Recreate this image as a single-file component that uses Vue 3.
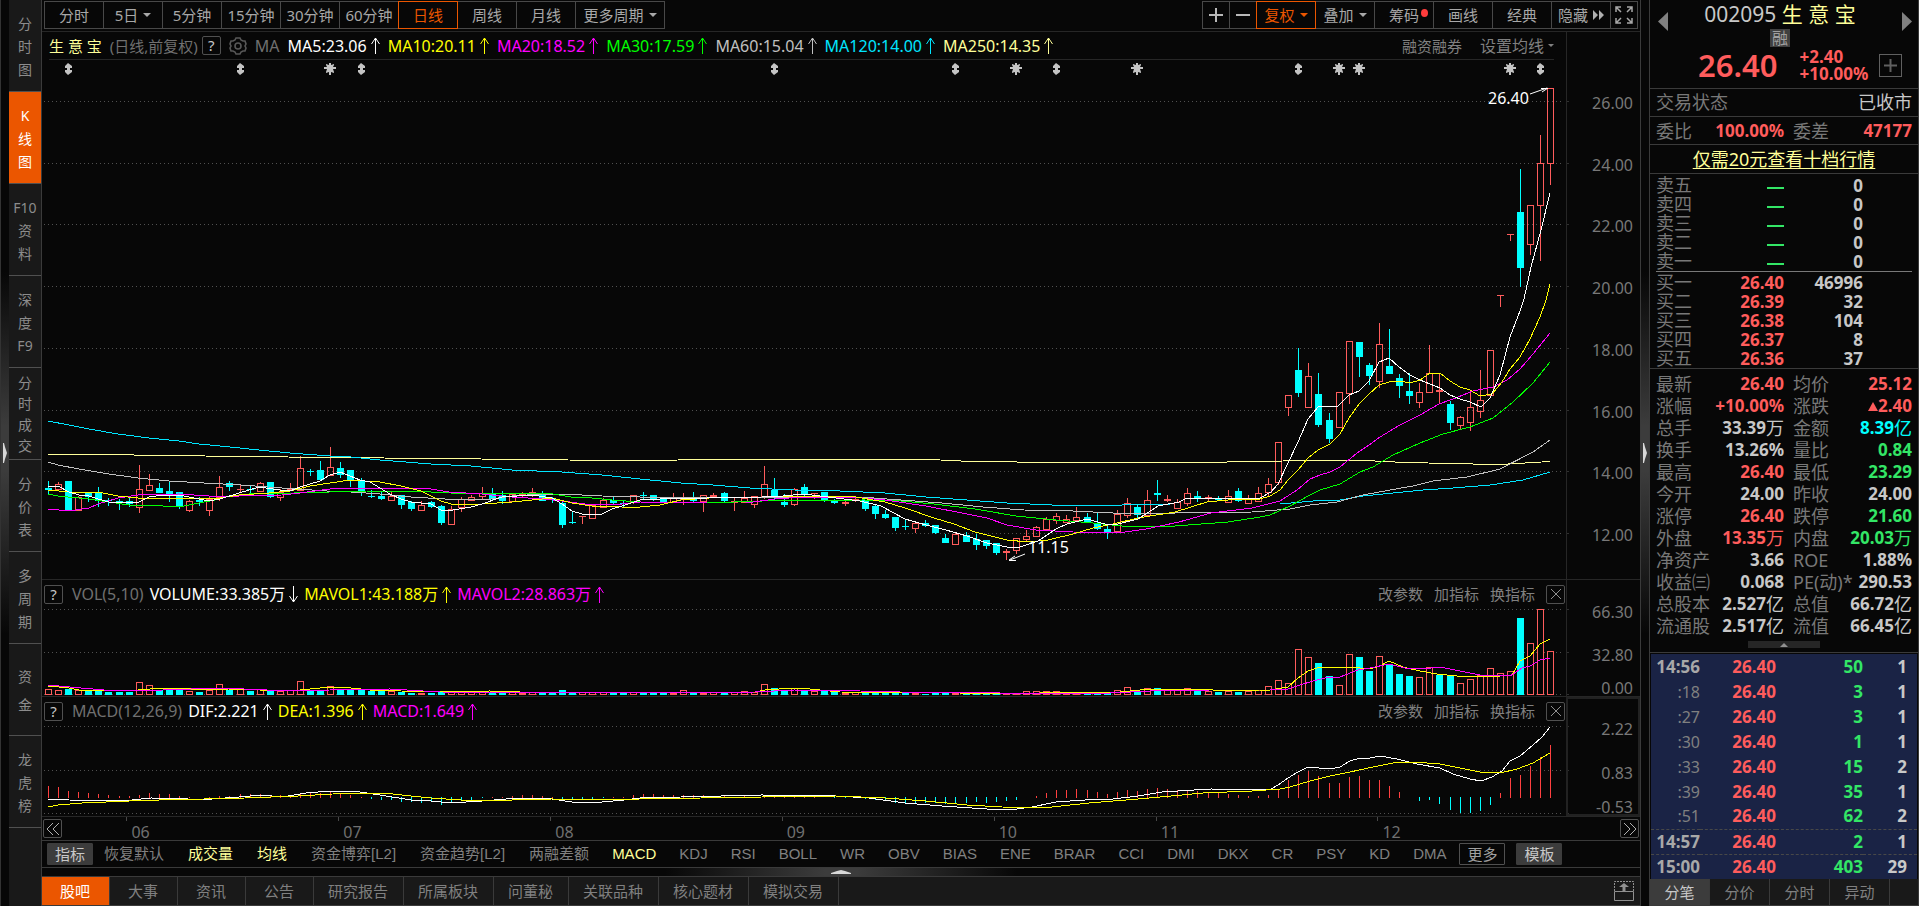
<template>
  <div class="app">
    <div class="split split-v">
      <svg width="4" height="20" viewBox="0 0 4 20"><path d="M0 0h1l1 4 2 6-2 6-1 4H0z" fill="#d8d8d8" /></svg>
    </div>

    <nav class="side">
      <button
        v-for="item in sideItems"
        :key="item.join('')"
        :class="['side-item', 'n' + item.length, { active: item[0] === 'K' }]"
      >
        <span v-for="ch in item" :key="ch">{{ ch }}</span>
      </button>
    </nav>

    <main class="main">
      <div class="toolbar">
        <div class="btns">
          <button v-for="p in periods" :key="p.text" :class="['tb', { active: p.text === '日线', wide: p.wide }]">
            {{ p.text }}<i v-if="p.caret" class="caret"></i>
          </button>
        </div>
        <div class="btns">
          <button class="tb icon" aria-label="放大">
            <svg width="16" height="16" viewBox="0 0 16 16"><path d="M1 8h14M8 1v14" stroke="#b8b8b8" stroke-width="2" /></svg>
          </button>
          <button class="tb icon" aria-label="缩小">
            <svg width="16" height="16" viewBox="0 0 16 16"><path d="M1 8h14" stroke="#b8b8b8" stroke-width="2" /></svg>
          </button>
          <button class="tb active">复权<i class="caret"></i></button>
          <button class="tb">叠加<i class="caret"></i></button>
          <button class="tb">筹码<i class="dot"></i></button>
          <button class="tb">画线</button>
          <button class="tb">经典</button>
          <button class="tb">隐藏
            <svg width="11" height="10" viewBox="0 0 11 10"><path d="M0 0l5 5-5 5zM6 0l5 5-5 5z" fill="#b0b0b0" /></svg>
          </button>
          <button class="tb icon" aria-label="全屏">
            <svg width="18" height="18" viewBox="0 0 18 18" fill="none" stroke="#a8a8a8" stroke-width="1.5">
              <path d="M1 6V1h5M12 1h5v5M17 12v5h-5M6 17H1v-5M1 1l5 5M17 1l-5 5M17 17l-5-5M1 17l5-5" />
            </svg>
          </button>
        </div>
      </div>

      <section class="panel price">
        <div class="plot">
          <div class="legend legend-main">
            <b class="stock">生 意 宝</b>
            <span class="dim cn">(日线,前复权)</span>
            <button class="q">?</button>
            <svg class="gear" width="18" height="18" viewBox="0 0 18 18" fill="none" stroke="#585858" stroke-width="1.6">
              <path d="M7 1h4l1 2 2 1 2 0 1 3-1 2 1 2-1 3-2 0-2 1-1 2H7l-1-2-2-1-2 0-1-3 1-2-1-2 1-3 2 0 2-1z" />
              <circle cx="9" cy="9" r="3" />
            </svg>
            <span class="dim">MA</span>
            <LegendValue v-for="m in maLegend" :key="m.text" :text="m.text" :color="m.color" />
            <span class="legend-right">
              <button class="txt">融资融券</button>
              <button class="txt set">设置均线<i class="caret"></i></button>
            </span>
          </div>
          <svg class="chart" viewBox="42 60 1524 519" preserveAspectRatio="none">
            <g class="grid">
              <path v-for="y in [101, 163, 224, 286, 348, 410, 471, 533]" :key="y" :d="`M44 ${y}.5H1564`" />
            </g>
            <path class="tick" d="M1566 101.5h3M1566 163.5h3M1566 224.5h3M1566 286.5h3M1566 348.5h3M1566 410.5h3M1566 471.5h3M1566 533.5h3" />
            <g v-for="m in marks" :key="m.i" fill="#c4c4c4" :transform="`translate(${xAt(m.i)} 69)`">
              <path v-if="m.star" d="M-1-6h2v2l3-1v1l-1 2h3v2H3l1 3v1L1 3v3h-2V3l-3 1V3l1-3h-3v-2h3l-1-2v-1l3 1z" />
              <path v-else d="M0-6l4 3v2H2v2h2v2L0 6l-3-3V1h2v-2h-2v-2z" />
            </g>
            <g v-for="(c, i) in candles" :key="i" :fill="c[0] === 'u' ? UP : DOWN" shape-rendering="crispEdges">
              <rect :x="xAt(i)" :y="c[1]" width="1" :height="c[2] - c[1]" />
              <rect :x="xAt(i)" :y="c[3]" width="1" :height="c[4] - c[3]" />
              <rect
                v-if="c[0] === 'u' && c[3] - c[2] > 2"
                :x="xAt(i) - 2.5" :y="c[2] + 0.5" width="6" :height="c[3] - c[2]" fill="none" :stroke="UP"
              />
              <rect v-else :x="xAt(i) - 3" :y="c[2]" width="7" :height="c[3] - c[2]" />
            </g>
            <polyline v-for="l in maLines" :key="l.color" class="line" :points="l.points" :stroke="l.color" />
            <text x="1488" y="104" class="note">26.40</text>
            <path class="arrow" d="M1530 94L1547 88M1541 88.5h7M1542 92l6-4" />
            <text x="1028" y="553" class="note">11.15</text>
            <path class="arrow" d="M1025 554L1010 560M1009 560.5h7M1009 560l6-4" />
          </svg>
        </div>
        <div class="axis axis-price">
          <span v-for="v in ['26.00', '24.00', '22.00', '20.00', '18.00', '16.00', '14.00', '12.00']" :key="v">{{ v }}</span>
        </div>
      </section>

      <section class="panel vol">
        <div class="plot">
          <div class="legend legend-sub">
            <button class="q">?</button>
            <span class="dim">VOL(5,10)</span>
            <LegendValue text="VOLUME:33.385万" color="#ffffff" down />
            <LegendValue text="MAVOL1:43.188万" color="#ffff00" />
            <LegendValue text="MAVOL2:28.863万" color="#ff00ff" />
            <PanelTools />
          </div>
          <svg class="chart" viewBox="42 608 1524 88" preserveAspectRatio="none">
            <path class="grid" d="M44 609.5H1564M44 652.5H1564M44 694.5H1564" />
            <path class="tick" d="M1566 609.5h3M1566 652.5h3M1566 694.5h3" />
            <template v-for="(v, i) in volumes" :key="i">
              <rect
                v-if="volUp(i) && v > 5"
                :x="xAt(i) - 2.5" :y="694.5 - Math.round(v / 3)" width="6" :height="Math.round(v / 3)"
                fill="#070707" :stroke="UP" shape-rendering="crispEdges"
              />
              <rect
                v-else
                :x="xAt(i) - 3" :y="695 - Math.round(v / 3)" width="7" :height="Math.round(v / 3)"
                :fill="volUp(i) ? UP : DOWN" shape-rendering="crispEdges"
              />
            </template>
            <polyline class="line" stroke="#ffff00" :points="mavol1" />
            <polyline class="line" stroke="#ff00ff" :points="mavol2" />
          </svg>
        </div>
        <div class="axis axis-sub"><span>66.30</span><span>32.80</span><span>0.00</span></div>
      </section>

      <section class="panel macd">
        <div class="plot">
          <div class="legend legend-sub">
            <button class="q">?</button>
            <span class="dim">MACD(12,26,9)</span>
            <LegendValue text="DIF:2.221" color="#ffffff" />
            <LegendValue text="DEA:1.396" color="#ffff00" />
            <LegendValue text="MACD:1.649" color="#ff00ff" />
            <PanelTools />
          </div>
          <svg class="chart" viewBox="42 725 1524 91" preserveAspectRatio="none">
            <path class="grid" d="M44 726.5H1564M44 770.5H1564M44 813.5H1564" />
            <path class="tick" d="M1566 726.5h3M1566 770.5h3M1566 813.5h3" />
            <rect
              v-for="(v, i) in macd"
              :key="i"
              :x="xAt(i)" :y="v > 0 ? 798 - Math.round(v / 3) : 797" width="1" :height="Math.abs(Math.round(v / 3))"
              :fill="v > 0 ? '#ff4040' : DOWN" shape-rendering="crispEdges"
            />
            <polyline class="line" stroke="#ffffff" :points="dif" />
            <polyline class="line" stroke="#ffff00" :points="dea" />
          </svg>
        </div>
        <div class="axis axis-sub boxed"><span>2.22</span><span>0.83</span><span>-0.53</span></div>
      </section>

      <div class="dates">
        <button class="q page" aria-label="向前">
          <svg width="14" height="14" viewBox="0 0 14 14" fill="none" stroke="#b0b0b0"><path d="M7 1L1 7l6 6M13 1L7 7l6 6" /></svg>
        </button>
        <span class="month first" :style="{ flexGrow: 66 }"></span>
        <span v-for="m in months" :key="m.text" class="month" :style="{ flexGrow: m.span }">{{ m.text }}</span>
        <span class="date-end">
          <button class="q page" aria-label="向后">
            <svg width="14" height="14" viewBox="0 0 14 14" fill="none" stroke="#b0b0b0"><path d="M1 1l6 6-6 6M7 1l6 6-6 6" /></svg>
          </button>
        </span>
      </div>

      <div class="indicators">
        <button class="chip filled">指标</button>
        <button
          v-for="t in indicators"
          :key="t"
          :class="['ind', { latin: /^[A-Z]+$/.test(t), on: ['成交量', '均线', 'MACD'].includes(t) }]"
        >{{ t }}</button>
        <span class="chips">
          <button class="chip">更多</button>
          <button class="chip filled">模板</button>
        </span>
      </div>

      <div class="split split-h">
        <svg width="20" height="4" viewBox="0 0 20 4"><path d="M0 4V3l6-2 4-1 4 1 6 2v1z" fill="#d8d8d8" /></svg>
      </div>

      <div class="tabs">
        <button v-for="t in bottomTabs" :key="t" :class="['tab', { active: t === '股吧' }]">{{ t }}</button>
        <button class="dock" aria-label="展开">
          <svg width="20" height="20" viewBox="0 0 20 20" fill="none" stroke="#909090">
            <path d="M.5 10V.5h19V10" stroke-dasharray="2 1" />
            <path d="M.5 10.5h19v9H.5z" />
            <path d="M10 10V4" stroke-width="3" />
            <path d="M5 6l5-4 5 4z" fill="#909090" stroke="none" />
          </svg>
        </button>
      </div>
    </main>

    <div class="split split-v right">
      <svg width="4" height="20" viewBox="0 0 4 20"><path d="M0 0h1l1 4 2 6-2 6-1 4H0z" fill="#d8d8d8" /></svg>
    </div>

    <aside class="quote">
      <header class="head">
        <button class="nav-arrow" aria-label="上一只">
          <svg width="10" height="19" viewBox="0 0 10 19"><path d="M10 0v19L0 9.500z" fill="#808080" /></svg>
        </button>
        <div class="head-mid">
          <h1>002095 <span>生 意 宝</span></h1>
          <span class="badge">融</span>
          <div class="price-row">
            <strong>26.40</strong>
            <span class="chg">+2.40<br />+10.00%</span>
            <button class="add" aria-label="加自选">
              <svg width="13" height="13" viewBox="0 0 13 13"><path d="M0 6.500h13M6.500 0v13" stroke="#606060" stroke-width="2" /></svg>
            </button>
          </div>
        </div>
        <button class="nav-arrow" aria-label="下一只">
          <svg width="10" height="19" viewBox="0 0 10 19"><path d="M0 0v19l10-9.500z" fill="#808080" /></svg>
        </button>
      </header>

      <div class="line-row"><span>交易状态</span><span class="state">已收市</span></div>
      <dl class="stats one">
        <div><dt>委比</dt><dd class="red">100.00%</dd></div>
        <div><dt>委差</dt><dd class="red">47177</dd></div>
      </dl>
      <a class="promo" href="#">仅需20元查看十档行情</a>

      <table class="book">
        <colgroup><col class="c1" /><col class="c2" /><col class="c3" /><col /></colgroup>
        <tbody class="sell">
          <tr v-for="n in '五四三二一'" :key="n">
            <th>卖{{ n }}</th><td><i class="dash"></i></td><td>0</td><td></td>
          </tr>
        </tbody>
        <tbody class="buy">
          <tr v-for="b in bids" :key="b[0]">
            <th>{{ b[0] }}</th><td class="red">{{ b[1] }}</td><td>{{ b[2] }}</td><td></td>
          </tr>
        </tbody>
      </table>

      <dl class="stats">
        <div v-for="s in stats" :key="s[0]">
          <dt>{{ s[0] }}</dt>
          <dd :class="s[2]"><i v-if="s[4]" class="tri"></i>{{ s[1] }}<span v-if="s[3]" class="unit">{{ s[3] }}</span></dd>
        </div>
      </dl>

      <div class="fold">
        <button aria-label="收起"><svg width="8" height="4" viewBox="0 0 8 4"><path d="M4 0l4 4H0z" fill="#909090" /></svg></button>
      </div>

      <table class="ticks">
        <colgroup><col class="t1" /><col class="t2" /><col class="t3" /><col /></colgroup>
        <tbody>
          <tr v-for="t in ticks" :key="t[0]" :class="{ cut: t[0] === '14:57' || t[0] === '15:00' }">
            <td :class="t[0][0] === ':' ? 'sec' : 'min'">{{ t[0] }}</td>
            <td class="red">26.40</td>
            <td class="green">{{ t[1] }}</td>
            <td>{{ t[2] }}</td>
          </tr>
        </tbody>
      </table>

      <div class="qtabs">
        <button v-for="t in ['分笔', '分价', '分时', '异动']" :key="t" :class="{ active: t === '分笔' }">{{ t }}</button>
      </div>
    </aside>
  </div>
</template>

<script setup>
import { h } from 'vue'

const UP = '#ff5c5c'
const DOWN = '#00ffff'

const LegendValue = (props) =>
  h('span', { class: 'lv', style: { color: props.color } }, [
    props.text,
    h('svg', { class: 'lv-arrow', width: 9, height: 17, viewBox: '0 0 9 17', fill: 'none', stroke: 'currentColor' }, [
      h('path', { d: props.down ? 'M4.5 0v16M.5 10l4 6 4-6' : 'M4.5 17V1M.5 7l4-6 4 6' })
    ])
  ])
LegendValue.props = { text: String, color: String, down: Boolean }

const PanelTools = () =>
  h('span', { class: 'tools' }, [
    ...['改参数', '加指标', '换指标'].map((t) => h('button', { class: 'tool' }, t)),
    h('button', { class: 'tool close', 'aria-label': '关闭' }, [
      h('svg', { width: 10, height: 10, viewBox: '0 0 10 10', stroke: '#909090' }, [h('path', { d: 'M0 0l10 10M10 0L0 10' })])
    ])
  ])

const sideItems = ['分时图', 'K线图', ['F10', '资', '料'], ['深', '度', 'F9'], '分时成交', '分价表', '多周期', '资金', '龙虎榜'].map((s) => [...s])

const periods = [
  { text: '分时' }, { text: '5日', caret: true }, { text: '5分钟' }, { text: '15分钟' }, { text: '30分钟' },
  { text: '60分钟' }, { text: '日线' }, { text: '周线' }, { text: '月线' }, { text: '更多周期', caret: true, wide: true }
]

const maLegend = [
  { text: 'MA5:23.06', color: '#ffffff' },
  { text: 'MA10:20.11', color: '#ffff00' },
  { text: 'MA20:18.52', color: '#ff00ff' },
  { text: 'MA30:17.59', color: '#00ff00' },
  { text: 'MA60:15.04', color: '#c0c0c0' },
  { text: 'MA120:14.00', color: '#00e5ff' },
  { text: 'MA250:14.35', color: '#ffff99' }
]

const indicators = ['恢复默认', '成交量', '均线', '资金博弈[L2]', '资金趋势[L2]', '两融差额', 'MACD', 'KDJ', 'RSI', 'BOLL', 'WR', 'OBV', 'BIAS', 'ENE', 'BRAR', 'CCI', 'DMI', 'DKX', 'CR', 'PSY', 'KD', 'DMA']
const bottomTabs = ['股吧', '大事', '资讯', '公告', '研究报告', '所属板块', '问董秘', '关联品种', '核心题材', '模拟交易']

const months = [
  { text: '06', span: 212 }, { text: '07', span: 212 }, { text: '08', span: 232 }, { text: '09', span: 212 },
  { text: '10', span: 161 }, { text: '11', span: 222 }, { text: '12', span: 187 }
]

const bids = [['买一', '26.40', 46996], ['买二', '26.39', 32], ['买三', '26.38', 104], ['买四', '26.37', 8], ['买五', '26.36', 37]]

const stats = [
  ['最新', '26.40', 'red'], ['均价', '25.12', 'red'],
  ['涨幅', '+10.00%', 'red'], ['涨跌', '2.40', 'red', '', true],
  ['总手', '33.39', '', '万'], ['金额', '8.39', 'cyan', '亿'],
  ['换手', '13.26%', ''], ['量比', '0.84', 'green'],
  ['最高', '26.40', 'red'], ['最低', '23.29', 'green'],
  ['今开', '24.00', ''], ['昨收', '24.00', ''],
  ['涨停', '26.40', 'red'], ['跌停', '21.60', 'green'],
  ['外盘', '13.35', 'red', '万'], ['内盘', '20.03', 'green', '万'],
  ['净资产', '3.66', ''], ['ROE', '1.88%', ''],
  ['收益㈢', '0.068', ''], ['PE(动)*', '290.53', ''],
  ['总股本', '2.527', '', '亿'], ['总值', '66.72', '', '亿'],
  ['流通股', '2.517', '', '亿'], ['流值', '66.45', '', '亿']
]

const ticks = [
  ['14:56', 50, 1], [':18', 3, 1], [':27', 3, 1], [':30', 1, 1], [':33', 15, 2],
  [':39', 35, 1], [':51', 62, 2], ['14:57', 2, 1], ['15:00', 403, 29]
]

const xAt = (i) => Math.round(48 + i * 10.083)

const marks = [2, 19, 28, 31, 72, 90, 96, 100, 108, 124, 128, 130, 145, 148].map((i) => ({
  i,
  star: [28, 96, 108, 128, 130, 145].includes(i)
}))

// direction, high, body top, body bottom, low
const candles = `d481,488,490,494 u482,484,489,490 d481,481,510,510 u496,497,510,510 d492,493,497,502 d487,493,501,507
d498,500,501,506 d499,501,502,510 d497,501,504,507 u465,489,507,513 u474,485,490,490 d483,488,493,493 d482,491,495,502
d492,492,506,509 u500,501,510,512 d497,500,502,506 u497,499,510,516 u476,487,497,501 d481,483,487,491 u484,489,490,493
d485,489,490,493 u482,483,491,491 d482,482,497,498 u489,492,497,501 u483,489,491,491 u456,468,490,491 d469,471,472,476
d461,470,480,480 u447,467,475,476 d462,468,475,478 d470,470,480,487 d478,481,491,496 d490,496,497,498 d492,496,499,500
u492,496,500,500 d495,495,505,509 d501,502,509,511 u501,505,510,510 d501,502,507,508 d505,506,523,525 u506,509,524,524
u497,499,507,512 u495,497,500,501 u487,493,496,499 d488,493,499,501 d491,495,501,504 u493,494,501,502 u492,494,496,497
u488,492,495,497 d491,493,501,501 d497,499,500,503 d501,503,525,528 d511,522,523,524 u516,516,517,524 u505,505,518,518
u498,500,507,508 d497,500,503,505 d500,503,504,507 u495,495,502,504 d492,495,496,499 d495,495,500,501 d497,499,503,503
u493,497,502,503 u493,498,500,505 d492,498,501,502 u495,495,501,512 u493,495,497,497 d492,493,501,502 u497,501,503,511
u491,498,502,503 u496,496,504,508 u466,484,496,499 d478,490,496,499 d494,502,505,507 u488,489,504,506 d484,487,494,496
u493,493,494,499 d492,492,500,502 d499,500,503,504 u499,502,504,506 u496,499,501,502 d500,500,509,511 d504,506,514,519
d510,514,518,519 d517,517,528,531 d519,526,527,530 u521,523,528,533 d520,523,526,527 d525,525,533,534 d534,538,543,543
u533,534,544,544 d532,535,542,542 d534,539,545,550 d540,540,546,549 d543,543,553,555 u549,551,553,560 u538,538,550,554
u530,536,539,542 u526,527,536,536 u517,519,529,530 u513,516,520,524 u515,519,522,523 u507,517,520,521 d513,517,522,523
d512,523,529,530 d525,529,533,539 u510,514,531,533 u498,503,515,518 d504,507,515,519 u490,500,515,517 d480,493,495,501
u495,499,501,502 u499,502,508,508 u488,493,503,506 d491,496,499,502 u495,497,498,502 d496,498,500,501 u490,496,502,503
d488,491,501,502 u495,499,503,504 u487,493,501,502 u478,484,492,496 u442,442,482,485 u395,395,407,416 d348,370,393,397
u363,376,407,407 d373,394,425,427 d413,420,439,443 u392,392,427,427 u341,341,393,404 d342,342,357,377 d363,365,376,385
u323,344,381,388 d329,366,374,374 d374,378,386,398 d373,391,396,404 u383,392,402,408 u345,373,392,393 u373,390,392,404
d401,404,423,430 u416,417,425,429 u393,407,422,431 u370,400,411,418 u350,350,395,395 u295,295,296,307 u234,234,235,241
d169,212,268,287 u205,205,244,255 u135,163,205,261 u88,88,163,185`
  .split(/\s+/)
  .map((s) => [s[0], ...s.slice(1).split(',').map(Number)])

const volumes = [
  16, 13, 18, 12, 12, 12, 8, 9, 10, 37, 28, 16, 16, 16, 10, 8, 13, 31, 16, 15, 12, 15, 12, 10, 11, 38, 16, 16, 25, 16,
  15, 14, 11, 12, 8, 9, 6, 5, 6, 13, 7, 9, 7, 7, 6, 7, 6, 5, 6, 5, 6, 14, 8, 6, 7, 7, 5, 5, 6, 5,
  6, 6, 5, 11, 6, 5, 6, 6, 6, 10, 6, 31, 20, 12, 17, 12, 8, 11, 9, 5, 7, 8, 7, 6, 7, 6, 5, 4, 5, 5,
  5, 4, 4, 4, 5, 4, 5, 8, 8, 8, 10, 4, 6, 5, 6, 7, 13, 20, 10, 19, 22, 11, 13, 19, 12, 10, 10, 10, 10, 8,
  13, 25, 43, 34, 136, 112, 95, 56, 28, 121, 113, 71, 115, 89, 62, 56, 50, 82, 59, 56, 34, 46, 56, 79, 62, 68, 230, 154, 256, 130
]
// bars coloured by the previous close rather than by the candle body
const volFlip = [0, 124, 138]
const volUp = (i) => (candles[i][0] === 'u') !== volFlip.includes(i)

const macd = [
  35, 32, 20, 17, 14, 11, 8, 5, 5, 8, 14, 11, 11, 5, 2, 0, 2, 5, 7, 11, 11, 11, 8, 8, 5, 14, 14, 14, 17, 11,
  8, 2, -5, -8, -10, -14, -16, -17, -16, -23, -16, -10, -8, -4, 2, 2, 5, 8, 8, 5, 2, -8, -10, -10, -6, -4, 2, 2, 8, 11,
  11, 8, 8, 8, 8, 8, 6, 5, 4, 5, 4, 5, 6, 5, 5, 4, 3, 0, -2, -2, -3, -5, -8, -13, -18, -18, -18, -17, -17, -20,
  -17, -18, -16, -17, -16, -13, -8, 0, 5, 14, 23, 23, 26, 23, 17, 11, 17, 23, 20, 26, 29, 26, 23, 23, 20, 17, 14, 11, 8, 5,
  5, 8, 26, 53, 68, 80, 65, 44, 44, 62, 65, 53, 53, 35, 17, 0, -11, -10, -20, -38, -47, -49, -43, -23, 14, 59, 68, 95, 122, 158
]

const maLines = [
  { color: '#ffff99', points: '48,454.5 104,454.5 164,455.5 245,456.5 330,457.5 437,458.5 568,460 633,460.5 678,460 740,459.5 930,459.5 971,461.5 1062,462.5 1200,462.5 1283,461 1365,460.5 1395,462 1445,463.5 1500,464.5 1550,461.5' },
  { color: '#00e5ff', points: '48,421 69,425 89,429 118,434 149,438 179,441 199,444 220,446 259,450 290,453 330,456 351,457 380,460 431,464 471,466 512,470 562,472 602,475 640,479 681,483 713,485 750,488 794,490 840,491 885,493 926,497 967,500 1007,503 1052,505 1122,505 1171,504 1280,504 1313,501 1340,500 1363,496 1393,493 1423,490 1453,488 1490,485 1523,480 1550,472' },
  { color: '#c0c0c0', points: '48,462 58,465 79,469 109,474 138,478 169,481 204,483 241,485 282,488 327,491 351,492 380,494 411,497 462,500 491,499 512,496 542,494 582,495 602,496 640,497 762,497 860,497 901,500 942,503 983,507 1024,510 1073,511 1113,513 1175,513 1252,512 1290,509 1310,505 1337,502 1363,495 1390,490 1413,486 1433,481 1467,477 1500,469 1533,452 1550,440' },
  { color: '#00ff00', points: '48,494 58,496 89,499 109,502 129,505 163,506 179,507 199,503 220,499 229,496 249,494 294,493 330,492 367,491 411,491 451,493 547,493 571,497 592,498 612,500 640,502 707,503 762,501 864,500 901,501 934,504 975,509 1016,516 1056,520 1093,523 1122,526 1175,526 1228,522 1260,517 1270,515 1290,506 1310,495 1320,490 1340,484 1360,472 1373,467 1393,455 1420,443 1443,434 1470,427 1493,418 1513,402 1533,383 1550,362' },
  { color: '#ff00ff', points: '48,509 69,511 89,508 98,504 118,498 138,495 179,494 209,496 239,496 282,495 300,493 330,489 360,488 401,488 431,489 449,492 482,494 512,497 543,499 562,501 592,505 622,504 640,502 707,503 746,503 775,499 803,497 852,497 885,500 926,506 967,514 987,518 1007,525 1036,530 1073,532 1118,533 1146,529 1179,522 1211,513 1252,508 1280,501 1297,490 1310,479 1320,475 1330,472 1340,467 1357,453 1369,445 1380,437 1400,425 1420,415 1439,404 1453,399 1473,391 1493,387 1507,380 1520,369 1533,354 1550,333' },
  { color: '#ffff00', points: '48,490 69,492 98,492 118,496 138,498 220,498 239,495 269,493 290,491 310,486 330,483 350,480 380,482 401,486 421,491 441,501 451,504 482,504 512,502 552,498 572,503 592,506 622,507 640,507 660,505 681,500 709,498 762,497 794,496 850,496 885,502 905,508 934,518 954,524 975,532 1007,540 1028,542 1048,540 1073,534 1093,528 1113,524 1138,518 1175,512 1207,502 1228,500 1260,499 1270,496 1280,490 1288,480 1298,470 1308,458 1318,450 1330,444 1340,434 1349,418 1359,404 1369,394 1379,385 1389,382 1400,381 1410,383 1420,380 1430,373 1440,373 1450,381 1460,387 1470,390 1480,396 1492,394 1502,382 1510,369 1520,357 1530,339 1540,317 1546,300 1550,284' },
  { color: '#ffffff', points: '48,487 58,486 69,492 79,495 89,496 98,499 109,502 139,502 149,497 163,495 179,495 189,497 209,501 220,499 239,493 259,487 280,490 290,491 300,487 320,481 330,475 340,472 350,476 360,480 370,482 390,494 401,499 411,502 431,504 441,510 453,510 471,507 482,504 502,497 532,495 552,498 562,504 572,511 582,514 602,514 612,509 622,506 640,500 660,499 681,498 707,498 762,497 783,496 803,494 820,496 844,499 860,501 881,506 905,519 926,525 946,530 967,536 987,543 1007,547 1020,547 1038,541 1056,529 1067,524 1087,519 1105,524 1118,524 1138,519 1158,506 1179,502 1187,498 1260,498 1271,492 1278,484 1288,463 1298,442 1308,419 1318,407 1338,406 1349,395 1359,391 1369,381 1379,362 1389,358 1399,367 1410,375 1420,380 1430,384 1440,388 1450,395 1460,399 1470,402 1481,407 1490,398 1500,375 1510,337 1520,311 1524,299 1531,267 1541,230 1550,193' }
]

const mavol1 = '48,686 69,688 79,690 115,691 138,690 163,688 185,688 196,690 229,689 290,691 310,689 330,687 351,688 370,690 401,691 440,692 490,691 520,692 640,693 755,692 765,690 794,688 810,689 840,692 960,693 1040,693 1070,692 1120,692 1150,689 1200,689 1225,691 1260,690 1270,690 1288,687 1298,678 1308,671 1320,667 1343,667 1360,668 1370,669 1380,666 1389,661 1403,667 1420,671 1437,674 1457,676 1480,677 1500,676 1512,675 1520,661 1530,656 1540,644 1550,639'
const mavol2 = '48,685 70,687 115,691 163,690 220,688 290,691 330,690 390,689 440,692 640,693 755,692 794,690 860,691 900,692 1000,693 1110,693 1150,691 1210,690 1270,690 1288,689 1300,685 1313,681 1325,678 1340,677 1358,670 1370,668 1389,664 1405,668 1423,669 1440,667 1460,671 1480,675 1510,676 1522,668 1530,666 1540,660 1550,658'
const dif = '48,800 58,799 69,800 122,801 151,798 188,799 212,799 239,797 261,795 282,797 306,793 330,791 353,791 380,795 411,800 431,801 451,803 482,801 506,799 531,798 552,799 572,802 602,802 624,800 640,798 681,797 762,795 836,796 869,798 905,803 942,806 987,809 1009,810 1032,807 1056,802 1085,800 1113,799 1138,796 1162,792 1211,789 1260,790 1271,789 1278,785 1288,778 1298,772 1308,767 1330,769 1340,767 1350,761 1360,758 1370,758 1380,756 1397,759 1417,764 1440,768 1453,774 1470,779 1481,781 1492,777 1502,771 1510,761 1520,756 1533,745 1542,737 1550,727'
const dea = '48,807 58,805 82,803 106,802 129,801 159,800 204,799 245,798 298,796 350,793 384,793 411,796 431,798 461,800 512,800 552,799 592,800 640,799 762,797 836,796 885,798 926,801 967,805 1020,808 1052,807 1089,803 1138,799 1171,796 1203,793 1252,791 1280,789 1290,787 1310,781 1330,776 1350,772 1373,767 1393,763 1413,762 1440,764 1460,768 1480,772 1500,773 1517,769 1533,763 1550,753'
</script>

<style>
html, body { background: #070707; }
.lv { display: flex; align-items: center; gap: 4px; white-space: nowrap; }
.lv-arrow { flex: none; }
.tools { margin-left: auto; display: flex; align-items: center; gap: 11px; }
.tool { border: 0; padding: 0; background: none; color: #808080; font: 15px/20px "Noto Sans", "Noto Sans CJK SC", sans-serif; }
.tool.close { width: 19px; height: 19px; border: 1px solid #505050; border-radius: 2px; display: flex; align-items: center; justify-content: center; }
</style>

<style scoped>
.app {
  display: flex;
  height: 100vh;
  min-height: 906px;
  background: #070707;
  color: #c8c8c8;
  font-family: "Noto Sans", "Noto Sans CJK SC", sans-serif;
  font-size: 15px;
  line-height: 20px;
  box-sizing: border-box;
}
.app *, .app *::before { box-sizing: border-box; }
button { font-family: inherit; font-size: 15px; line-height: 20px; background: none; border: 0; padding: 0; margin: 0; color: inherit; white-space: nowrap; cursor: pointer; }
svg { display: block; }
i { font-style: normal; }

.split { display: flex; align-items: center; justify-content: center; flex: none; }
.split-v { width: 9px; border-left: 1px solid #333; background: linear-gradient(#070707 30%, #3c3c3c 47%, #3c3c3c 52%, #070707 70%); }
.split-v.right { width: 8px; border: 0; }
.split-h { height: 9px; border-bottom: 1px solid #3a3a3a; background: linear-gradient(90deg, #070707 39%, #3c3c3c 49%, #3c3c3c 51%, #070707 61%); }

.side { width: 33px; flex: none; background: #191919; border-right: 1px solid #3a3a3a; display: flex; flex-direction: column; }
.side-item { height: 92px; padding-top: 2px; border-bottom: 1px solid #505050; display: flex; flex-direction: column; align-items: center; justify-content: center; color: #8c8c8c; font-size: 14px; line-height: 23px; }
.side-item.n4 { line-height: 21px; padding-top: 0; }
.side-item.n2 { line-height: 28px; }
.side-item.active { background: #eb5600; color: #fff; }

.main { flex: 1; min-width: 0; display: flex; flex-direction: column; border-right: 1px solid #3a3a3a; }
.toolbar { height: 32px; flex: none; padding: 1px 2px 0; border-bottom: 1px solid #262626; display: flex; justify-content: space-between; align-items: flex-start; }
.btns { display: flex; }
.tb { width: 60px; height: 28px; margin-right: -1px; border: 1px solid #484848; color: #a8a8a8; display: flex; align-items: center; justify-content: center; gap: 5px; }
.btns .tb:last-child { margin-right: 0; }
.tb.wide { width: 90px; }
.tb.icon { width: 28px; }
.tb.active { border-color: #eb5600; color: #eb5600; position: relative; }
.caret { border: 4px solid transparent; border-top-color: currentColor; border-bottom: 0; }
.dot { width: 7px; height: 8px; border-radius: 50%; background: #ff3c3c; align-self: flex-start; margin: 7px -9px 0 -3px; }

.panel { display: flex; border-bottom: 1px solid #262626; }
.price { flex: 1; min-height: 0; }
.vol { height: 117px; }
.macd { height: 120px; }
.plot { flex: 1; min-width: 0; display: flex; flex-direction: column; }
.legend { height: 28px; flex: none; padding: 0 1px 0 2px; display: flex; align-items: center; font-size: 16px; }
.legend-sub { gap: 6px; }
.legend-sub .q { margin-right: 3px; }
.legend-main { margin: 0 12px 0 7px; padding: 0; border-bottom: 1px solid #262626; gap: 8px; }
.stock { color: #ffff99; font-weight: normal; font-size: 15px; white-space: nowrap; }
.dim { color: #707070; white-space: nowrap; }
.cn { font-size: 15px; margin-right: -4px; }
.q { width: 19px; height: 19px; border: 1px solid #505050; border-radius: 2px; color: #c8c8c8; line-height: 17px; display: flex; align-items: center; justify-content: center; flex: none; }
.legend-right { margin-left: auto; display: flex; gap: 18px; color: #808080; }
.txt { display: flex; align-items: center; gap: 4px; }
.txt.set { font-size: 16px; }
.txt .caret { border-width: 3px; border-bottom: 0; }
.chart { flex: 1; width: 100%; min-height: 0; overflow: visible; }
.grid, .grid path { stroke: #505050; stroke-dasharray: 1 3; fill: none; shape-rendering: crispEdges; }
.tick { stroke: #303030; }
.line { fill: none; stroke-width: 1; shape-rendering: crispEdges; }
.note { fill: #fff; font-size: 16px; }
.arrow { stroke: #fff; fill: none; }
.axis { width: 74px; flex: none; border-left: 1px solid #262626; padding-right: 7px; display: flex; flex-direction: column; color: #787878; font-size: 16px; text-align: right; }
.axis span { flex: 1; display: flex; align-items: center; justify-content: flex-end; }
.axis-price { padding-top: 40px; padding-bottom: 13px; }
.axis-sub { padding-top: 10px; }
.axis-sub span { flex: none; height: 43px; }
.axis-sub span:last-child { height: 24px; }
.boxed { border: 2px solid #222; padding-top: 8px; padding-right: 5px; }
.boxed span { height: 44px; }

.dates { height: 24px; border-bottom: 1px solid #3a3a3a; display: flex; padding: 2px 1px 0; }
.month { flex: 0 0 0; position: relative; padding-left: 5px; font-size: 16px; line-height: 26px; height: 20px; color: #707070; }
.month:not(.first)::before { content: ""; position: absolute; left: 0; top: -2px; width: 1px; height: 4px; background: #484848; }
.month.first { padding: 0; }
.date-end { width: 74px; flex: none; display: flex; justify-content: flex-end; }

.indicators { height: 27px; padding-left: 5px; border-bottom: 1px solid #3a3a3a; display: flex; align-items: center; gap: 24px; color: #808080; }
.ind { font-family: "Liberation Sans", "Noto Sans CJK SC", sans-serif; }
.ind.latin { margin-left: -1px; }
.ind.on { color: #ffff99; }
.chip { width: 46px; height: 22px; border: 1px solid #505050; border-radius: 1px; color: #a0a0a0; }
.chip.filled { background: #3c3c3c; border-color: #3c3c3c; color: #c8c8c8; }
.indicators > .chip { margin-right: -13px; }
.chips { display: flex; gap: 11px; margin-left: -11px; }

.tabs { height: 29px; background: #191919; border-bottom: 1px solid #3a3a3a; display: flex; }
.tab { min-width: 68px; padding: 0 15px 0 14px; border-right: 1px solid #3a3a3a; color: #808080; }
.tab.active { background: #eb5600; color: #fff; }
.dock { margin-left: auto; margin-right: 6px; display: flex; align-items: center; }

.quote { width: 270px; flex: none; border-left: 1px solid #3a3a3a; border-right: 1px solid #3a3a3a; display: flex; flex-direction: column; }
.head { height: 89px; border-bottom: 1px solid #3a3a3a; padding: 0 6px 0 8px; display: flex; justify-content: space-between; align-items: flex-start; }
.nav-arrow { margin-top: 12px; }
.head-mid { flex: 1; display: flex; flex-direction: column; align-items: center; padding-left: 10px; }
h1 { margin: 0 20px 0 0; font-size: 21px; line-height: 29px; font-weight: normal; white-space: nowrap; }
h1 span { color: #ffff99; }
.badge { width: 20px; height: 18px; margin-right: 20px; background: #404040; color: #a0a0a0; font-size: 16px; line-height: 18px; text-align: center; }
.price-row { align-self: stretch; display: flex; align-items: center; height: 36px; padding-left: 20px; color: #ff5c5c; font-weight: bold; }
.price-row strong { font-size: 31px; line-height: 34px; font-weight: 600; }
.chg { margin-left: 22px; font-size: 17px; line-height: 17px; }
.add { width: 23px; height: 23px; margin-left: auto; border: 1px solid #606060; display: flex; align-items: center; justify-content: center; }

.line-row { height: 29px; border-bottom: 1px solid #3a3a3a; padding: 0 6px; display: flex; justify-content: space-between; align-items: center; font-size: 18px; color: #787878; }
.state { color: #c8c8c8; }
.stats { margin: 0; padding: 4px 6px 0; display: grid; grid-template-columns: 128px 1fr; column-gap: 9px; }
.stats > div { display: flex; justify-content: space-between; align-items: center; height: 22px; white-space: nowrap; }
.stats dt { color: #787878; font-size: 18px; }
.stats dd { margin: 0; font-size: 17px; font-weight: bold; display: flex; align-items: center; }
.unit { font-weight: normal; font-size: 18px; }
.tri { border: 5px solid transparent; border-bottom: 9px solid #ff5c5c; border-top: 0; }
.stats.one { height: 28px; padding: 0 6px; align-items: center; border-bottom: 1px solid #3a3a3a; }
.promo { height: 29px; border-bottom: 1px solid #3a3a3a; color: #ffff99; font-size: 18px; line-height: 28px; text-align: center; text-underline-offset: 2px; }

.red { color: #ff5c5c; }
.green { color: #33e666; }
.cyan { color: #00ffff; }

table { border-collapse: collapse; table-layout: fixed; }
th, td { padding: 0; text-align: right; font-size: 17px; font-weight: bold; white-space: nowrap; }
.book { margin: 2px 6px 0; width: 256px; }
.book th { text-align: left; font-weight: normal; font-size: 18px; color: #787878; }
.book th, .book td { height: 19px; line-height: 19px; }
.buy tr:first-child th, .buy tr:first-child td { padding-top: 1px; }
.c1 { width: 49px; }
.c2 { width: 79px; }
.c3 { width: 79px; }
.buy { border-top: 1px solid #787878; }
.dash { display: inline-block; width: 17px; height: 2px; background: #33e666; vertical-align: middle; }
.book + .stats { border-top: 1px solid #3a3a3a; }

.fold { height: 16px; border-bottom: 1px solid #3a3a3a; display: flex; justify-content: center; align-items: center; margin-top: auto; }
.fold button { width: 72px; height: 7px; background: #262626; display: flex; align-items: center; justify-content: center; }
.ticks { margin: 1px 1px 0; background: #1a2345; width: calc(100% - 2px); }
.ticks td { height: 25px; line-height: 24px; }
.ticks td:last-child { padding-right: 10px; }
.ticks .min { color: #a8a8a8; }
.ticks .sec { color: #808080; font-weight: normal; font-size: 16px; }
.ticks .cut { border-top: 1px dashed #484848; }
.t1 { width: 49px; }
.t2 { width: 76px; }
.t3 { width: 87px; }
.qtabs { height: 27px; display: flex; background: #191919; border-bottom: 1px solid #3a3a3a; }
.qtabs button { width: 60px; border-right: 1px solid #3a3a3a; color: #808080; }
.qtabs .active { background: #3c3c3c; color: #c8c8c8; }
</style>
